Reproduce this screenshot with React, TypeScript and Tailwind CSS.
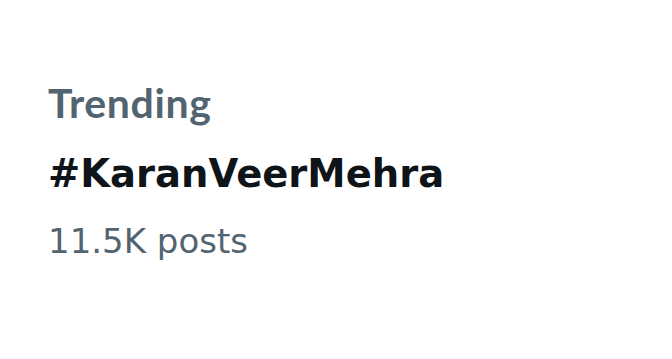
export default function App() {
  return (
    <div className="w-[672px] h-[359px] bg-white flex flex-col pl-[48px] pt-[79px]">
      <div className="font-['Lato',sans-serif] font-bold text-[41px] leading-[48px] tracking-[0.6px] text-[#536471]">
        Trending
      </div>
      <div className="mt-[23px] font-['DejaVu_Sans',sans-serif] font-bold text-[38.5px] leading-[48px] text-[#0f1419]">
        #KaranVeerMehra
      </div>
      <div className="mt-[23px] font-['DejaVu_Sans',sans-serif] text-[34px] leading-[40px] text-[#536471]">
        11.5K posts
      </div>
    </div>
  );
}
